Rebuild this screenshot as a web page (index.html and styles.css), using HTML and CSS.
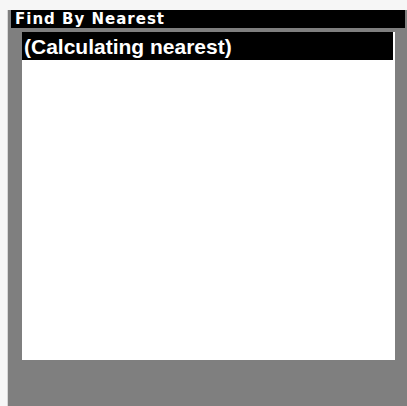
FILE: index.html
```html
<!DOCTYPE html>
<html>
<head>
<meta charset="utf-8">
<link rel="stylesheet" href="styles.css">
</head>
<body>
<div class="screen">
  <div class="title">Find By Nearest</div>
  <div class="panel">
    <div class="row selected">(Calculating nearest)</div>
  </div>
</div>
</body>
</html>
```
FILE: styles.css
```css
html, body {
  margin: 0;
  padding: 0;
}
body {
  background: #f6f6f6;
  width: 407px;
  height: 406px;
  overflow: hidden;
  padding-top: 10px;
  padding-left: 7px;
  box-sizing: border-box;
}
.screen {
  width: 400px;
  height: 396px;
  box-sizing: border-box;
  background: #7f7f7f;
  border-left: 1px solid #d6d6d6;
  display: flex;
  flex-direction: column;
}
.title {
  margin: 0 2px 0 3px;
  height: 18px;
  background: #000;
  color: #fff;
  font-family: "DejaVu Sans", sans-serif;
  font-weight: bold;
  font-size: 15px;
  letter-spacing: 1px;
  line-height: 19px;
  padding-left: 4px;
  white-space: nowrap;
}
.panel {
  margin: 4px 12px 0 14px;
  height: 328px;
  background: #fff;
  padding-right: 2px;
}
.row {
  height: 28px;
  line-height: 29px;
  padding-left: 2px;
  font-family: "Liberation Sans", Arial, sans-serif;
  font-weight: bold;
  font-size: 21px;
  white-space: nowrap;
}
.selected {
  background: #000;
  color: #fff;
}
```
